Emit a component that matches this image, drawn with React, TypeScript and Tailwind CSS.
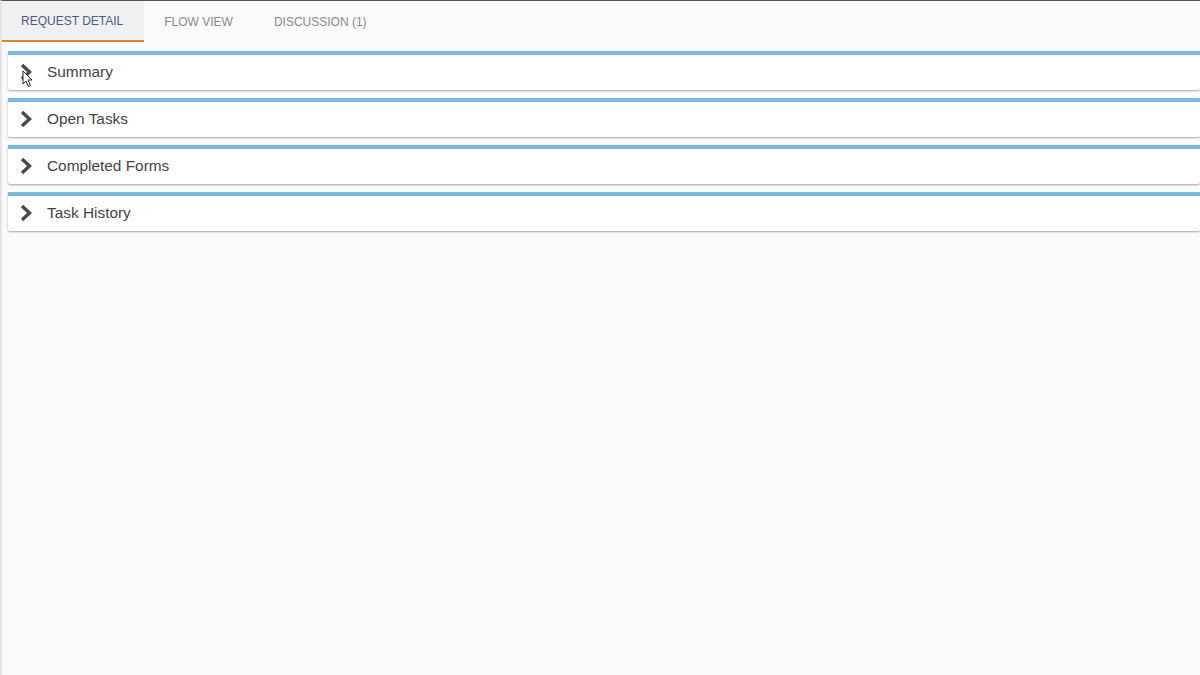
import React from "react";

const tabs = [
  { label: "Request Detail", active: true },
  { label: "Flow View", active: false },
  { label: "Discussion (1)", active: false },
];

const sections = ["Summary", "Open Tasks", "Completed Forms", "Task History"];

const Chevron = () => (
  <svg width="14" height="18" viewBox="0 0 14 18" className="shrink-0">
    <path
      d="M3 2 L10.5 9 L3 16"
      fill="none"
      stroke="#4a4a4a"
      strokeWidth="3.4"
      strokeLinejoin="miter"
    />
  </svg>
);

const Cursor = () => (
  <svg
    width="12"
    height="18"
    viewBox="0 0 12 18"
    className="absolute left-[14px] top-[15px]"
  >
    <path
      d="M1 1 L1 14 L4 11 L6.5 16.5 L8.5 15.5 L6 10 L10 10 Z"
      fill="#ffffff"
      stroke="#222"
      strokeWidth="1"
      strokeLinejoin="round"
    />
  </svg>
);

export default function App() {
  return (
    <div
      className="w-[1200px] h-[675px] bg-[#fafafa] border-t border-[#555] border-l-2 border-l-[#e4e4e4] overflow-hidden"
      style={{ fontFamily: '"Liberation Sans", Arial, sans-serif' }}
    >
      {/* Tabs */}
      <div className="flex h-[41px]">
        {tabs.map((t) => (
          <div
            key={t.label}
            className={
              t.active
                ? "pl-[19px] pr-[21px] flex items-center uppercase text-[12px] text-[#4b5a8c] bg-[#f0f0f0] border-b-2 border-[#d9823b]"
                : "pl-5 pr-[21px] flex items-center uppercase text-[12px] text-[#8a8a8a]"
            }
          >
            {t.label}
          </div>
        ))}
      </div>

      {/* Sections */}
      <div className="flex flex-col gap-2 pl-[6px] pt-[9px]">
        {sections.map((s, i) => (
          <div
            key={s}
            className="relative bg-white border-t-[4px] border-[#7ab8e0] shadow-[0_1px_2px_rgba(0,0,0,0.35)] h-[39px] flex items-center pl-[11px] pb-[2px] gap-[14px] rounded-b-[2px]"
          >
            <Chevron />
            <span className="text-[15.4px] text-[#444]">{s}</span>
            {i === 0 && <Cursor />}
          </div>
        ))}
      </div>
    </div>
  );
}
